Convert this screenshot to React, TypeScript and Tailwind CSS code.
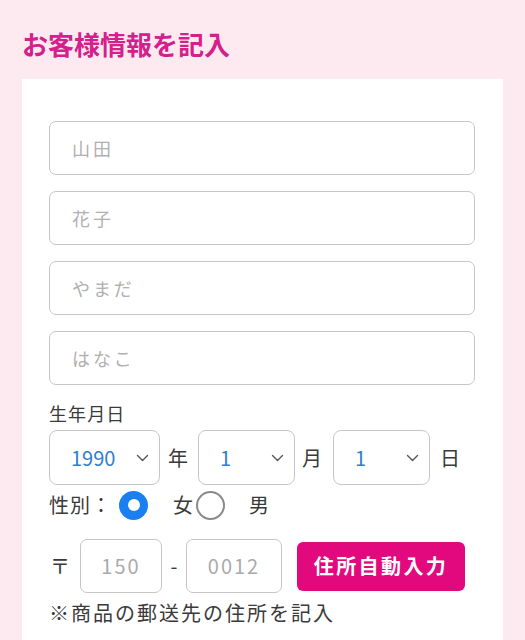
import React from "react";

const font = { fontFamily: '"Noto Sans CJK JP", "Noto Sans", sans-serif' };

function Chevron() {
  return (
    <svg width="13" height="8" viewBox="0 0 13 8" className="shrink-0">
      <path d="M1.5 1.5 L6.5 6.5 L11.5 1.5" fill="none" stroke="#555" strokeWidth="1.4" strokeLinecap="round" strokeLinejoin="round" />
    </svg>
  );
}

function Field({ placeholder }: { placeholder: string }) {
  return (
    <div className="h-[54px] w-full rounded-[7px] border-[1.5px] border-[#c6c6c6] bg-white flex items-center pl-[22px]">
      <span className="text-[18px] tracking-[0.16em] text-[#b0b0b0]">{placeholder}</span>
    </div>
  );
}

function Select({ value, w }: { value: string; w: string }) {
  return (
    <div className={`h-[55px] ${w} shrink-0 rounded-[8px] border-[1.5px] border-[#c6c6c6] bg-white flex items-center justify-between pl-[21px] pr-[10px]`}>
      <span className="text-[20px] text-[#2f7fd0]">{value}</span>
      <Chevron />
    </div>
  );
}

export default function App() {
  return (
    <div className="min-h-[640px] bg-[#fdeaf0] pt-[26px] overflow-hidden" style={font}>
      <h1 className="pl-[22px] text-[26px] leading-[36px] font-bold text-[#d4208c]">お客様情報を記入</h1>
      <div className="mt-[17px] ml-[22px] w-[481px] bg-white pt-[42px] pl-[27px] pr-[28px] pb-[40px] text-[#3a3a3a]">
        <div className="flex flex-col gap-[16px]">
          <Field placeholder="山田" />
          <Field placeholder="花子" />
          <Field placeholder="やまだ" />
          <Field placeholder="はなこ" />
        </div>
        <div className="mt-[16px] text-[18px] leading-[24px] tracking-[0.06em]">生年月日</div>
        <div className="mt-[5px] flex items-center text-[20px]">
          <Select value="1990" w="w-[111px]" />
          <span className="ml-[8px] w-[20px]">年</span>
          <span className="ml-[10px]"><Select value="1" w="w-[97px]" /></span>
          <span className="ml-[7px] w-[20px]">月</span>
          <span className="ml-[11px]"><Select value="1" w="w-[97px]" /></span>
          <span className="ml-[10px]">日</span>
        </div>
        <div className="mt-[5px] h-[30px] flex items-center text-[20px]">
          <span className="tracking-[0.05em]">性別：</span>
          <span className="ml-[7px] w-[29px] h-[29px] rounded-full bg-[#1a7ff0] flex items-center justify-center">
            <span className="w-[12px] h-[12px] rounded-full bg-white" />
          </span>
          <span className="ml-[25px]">女</span>
          <span className="ml-[3px] w-[29px] h-[29px] rounded-full border-2 border-[#8a8a8a] bg-white" />
          <span className="ml-[24px]">男</span>
        </div>
        <div className="mt-[19px] flex items-center text-[20px]">
          <span className="ml-[1px] w-[30px]">〒</span>
          <div className="h-[54px] w-[82px] rounded-[7px] border-[1.5px] border-[#c6c6c6] flex items-center justify-center">
            <span className="text-[20px] tracking-[0.1em] text-[#aaa]">150</span>
          </div>
          <span className="w-[24px] text-center">-</span>
          <div className="h-[54px] w-[96px] rounded-[7px] border-[1.5px] border-[#c6c6c6] flex items-center justify-center">
            <span className="text-[20px] tracking-[0.1em] text-[#aaa]">0012</span>
          </div>
          <button className="ml-[15px] h-[49px] w-[168px] rounded-[6px] bg-[#e2097f] text-white text-[20px] font-bold tracking-[0.12em] flex items-center justify-center">
            住所自動入力
          </button>
        </div>
        <div className="mt-[6px] text-[20px] leading-[28px] tracking-[0.1em]">※商品の郵送先の住所を記入</div>
      </div>
    </div>
  );
}
